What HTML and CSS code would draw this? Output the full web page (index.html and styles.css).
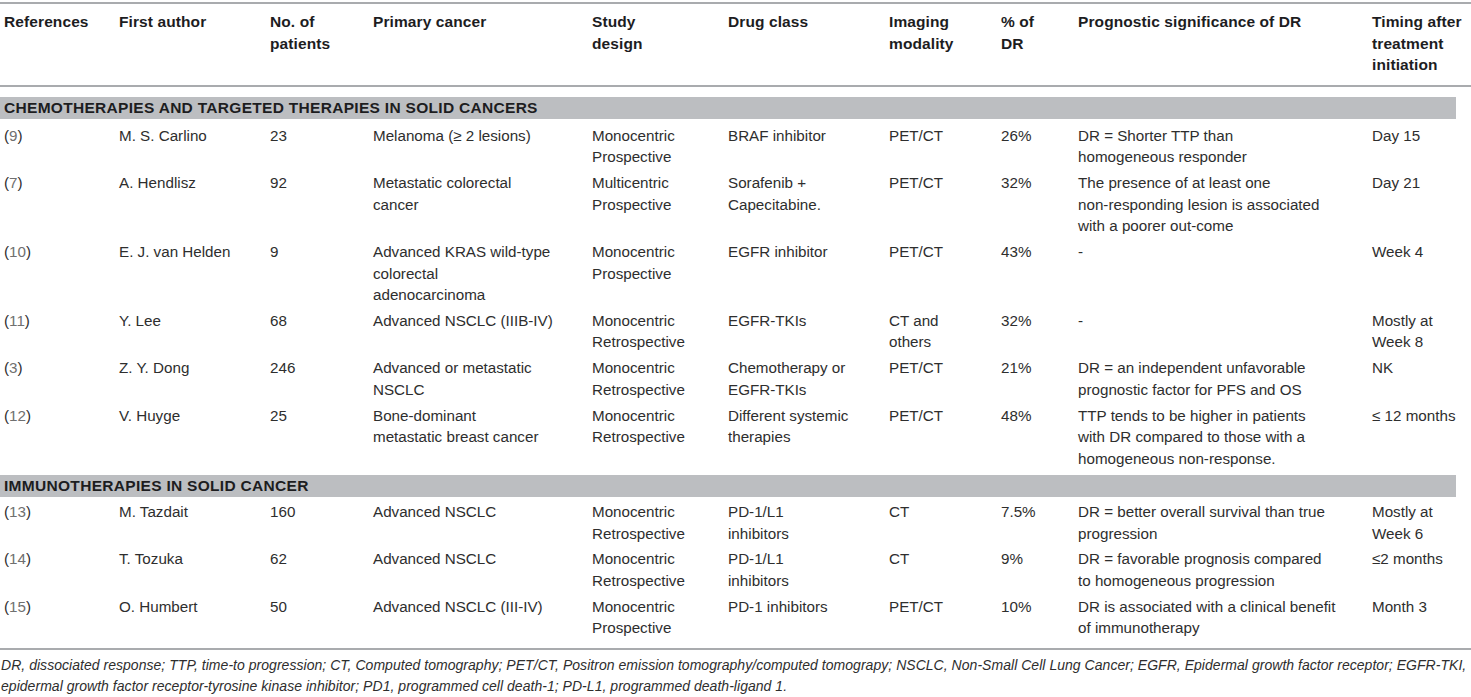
FILE: index.html
```html
<!DOCTYPE html>
<html lang="en">
<head>
<meta charset="utf-8">
<title>Dissociated response table</title>
<link rel="stylesheet" href="styles.css">
</head>
<body>
<div class="page">
<table class="dr-table">
  <colgroup>
    <col class="c1"><col class="c2"><col class="c3"><col class="c4"><col class="c5">
    <col class="c6"><col class="c7"><col class="c8"><col class="c9"><col class="c10">
  </colgroup>
  <thead>
    <tr>
      <th>References</th>
      <th>First author</th>
      <th>No. of<br>patients</th>
      <th>Primary cancer</th>
      <th>Study<br>design</th>
      <th>Drug class</th>
      <th>Imaging<br>modality</th>
      <th>% of<br>DR</th>
      <th>Prognostic significance of DR</th>
      <th>Timing after<br>treatment<br>initiation</th>
    </tr>
  </thead>
  <tbody>
    <tr class="section first">
      <td colspan="10"><div class="band">CHEMOTHERAPIES AND TARGETED THERAPIES IN SOLID CANCERS</div></td>
    </tr>
    <tr>
      <td><span class="ref">(<span class="num">9</span>)</span></td>
      <td>M. S. Carlino</td>
      <td>23</td>
      <td>Melanoma (≥ 2 lesions)</td>
      <td>Monocentric<br>Prospective</td>
      <td>BRAF inhibitor</td>
      <td>PET/CT</td>
      <td>26%</td>
      <td>DR = Shorter TTP than<br>homogeneous responder</td>
      <td>Day 15</td>
    </tr>
    <tr>
      <td><span class="ref">(<span class="num">7</span>)</span></td>
      <td>A. Hendlisz</td>
      <td>92</td>
      <td>Metastatic colorectal<br>cancer</td>
      <td>Multicentric<br>Prospective</td>
      <td>Sorafenib +<br>Capecitabine.</td>
      <td>PET/CT</td>
      <td>32%</td>
      <td>The presence of at least one<br>non-responding lesion is associated<br>with a poorer out-come</td>
      <td>Day 21</td>
    </tr>
    <tr>
      <td><span class="ref">(<span class="num">10</span>)</span></td>
      <td>E. J. van Helden</td>
      <td>9</td>
      <td>Advanced KRAS wild-type<br>colorectal<br>adenocarcinoma</td>
      <td>Monocentric<br>Prospective</td>
      <td>EGFR inhibitor</td>
      <td>PET/CT</td>
      <td>43%</td>
      <td>-</td>
      <td>Week 4</td>
    </tr>
    <tr>
      <td><span class="ref">(<span class="num">11</span>)</span></td>
      <td>Y. Lee</td>
      <td>68</td>
      <td>Advanced NSCLC (IIIB-IV)</td>
      <td>Monocentric<br>Retrospective</td>
      <td>EGFR-TKIs</td>
      <td>CT and<br>others</td>
      <td>32%</td>
      <td>-</td>
      <td>Mostly at<br>Week 8</td>
    </tr>
    <tr>
      <td><span class="ref">(<span class="num">3</span>)</span></td>
      <td>Z. Y. Dong</td>
      <td>246</td>
      <td>Advanced or metastatic<br>NSCLC</td>
      <td>Monocentric<br>Retrospective</td>
      <td>Chemotherapy or<br>EGFR-TKIs</td>
      <td>PET/CT</td>
      <td>21%</td>
      <td>DR = an independent unfavorable<br>prognostic factor for PFS and OS</td>
      <td>NK</td>
    </tr>
    <tr>
      <td><span class="ref">(<span class="num">12</span>)</span></td>
      <td>V. Huyge</td>
      <td>25</td>
      <td>Bone-dominant<br>metastatic breast cancer</td>
      <td>Monocentric<br>Retrospective</td>
      <td>Different systemic<br>therapies</td>
      <td>PET/CT</td>
      <td>48%</td>
      <td>TTP tends to be higher in patients<br>with DR compared to those with a<br>homogeneous non-response.</td>
      <td>≤ 12 months</td>
    </tr>
    <tr class="section">
      <td colspan="10"><div class="band">IMMUNOTHERAPIES IN SOLID CANCER</div></td>
    </tr>
    <tr>
      <td><span class="ref">(<span class="num">13</span>)</span></td>
      <td>M. Tazdait</td>
      <td>160</td>
      <td>Advanced NSCLC</td>
      <td>Monocentric<br>Retrospective</td>
      <td>PD-1/L1<br>inhibitors</td>
      <td>CT</td>
      <td>7.5%</td>
      <td>DR = better overall survival than true<br>progression</td>
      <td>Mostly at<br>Week 6</td>
    </tr>
    <tr>
      <td><span class="ref">(<span class="num">14</span>)</span></td>
      <td>T. Tozuka</td>
      <td>62</td>
      <td>Advanced NSCLC</td>
      <td>Monocentric<br>Retrospective</td>
      <td>PD-1/L1<br>inhibitors</td>
      <td>CT</td>
      <td>9%</td>
      <td>DR = favorable prognosis compared<br>to homogeneous progression</td>
      <td>≤2 months</td>
    </tr>
    <tr class="last">
      <td><span class="ref">(<span class="num">15</span>)</span></td>
      <td>O. Humbert</td>
      <td>50</td>
      <td>Advanced NSCLC (III-IV)</td>
      <td>Monocentric<br>Prospective</td>
      <td>PD-1 inhibitors</td>
      <td>PET/CT</td>
      <td>10%</td>
      <td>DR is associated with a clinical benefit<br>of immunotherapy</td>
      <td>Month 3</td>
    </tr>
  </tbody>
</table>
<p class="footnote">DR, dissociated response; TTP, time-to progression; CT, Computed tomography; PET/CT, Positron emission tomography/computed tomograpy; NSCLC, Non-Small Cell Lung Cancer; EGFR, Epidermal growth factor receptor; EGFR-TKI,<br>epidermal growth factor receptor-tyrosine kinase inhibitor; PD1, programmed cell death-1; PD-L1, programmed death-ligand 1.</p>
</div>
</body>
</html>
```

FILE: styles.css
```css
html, body {
  margin: 0;
  padding: 0;
  background: #ffffff;
}

body {
  font-family: "Liberation Sans", Arial, sans-serif;
  color: #2e2e2e;
  width: 1471px;
}

.page {
  padding-top: 2px;
}

.dr-table {
  width: 1471px;
  table-layout: fixed;
  border-collapse: collapse;
  border-top: 2px solid #a9abae;
  border-bottom: 2px solid #a9abae;
  font-size: 15.2px;
  line-height: 21.6px;
}

.c1 { width: 115px; }
.c2 { width: 151px; }
.c3 { width: 103px; }
.c4 { width: 219px; }
.c5 { width: 136px; }
.c6 { width: 161px; }
.c7 { width: 112px; }
.c8 { width: 77px; }
.c9 { width: 294px; }
.c10 { width: 103px; }

.dr-table th {
  text-align: left;
  vertical-align: top;
  font-weight: bold;
  font-size: 15.5px;
  letter-spacing: 0.1px;
  color: #1d1d1f;
  padding: 7px 4px 9px 4px;
  border-bottom: 2px solid #a9abae;
  white-space: nowrap;
}

.dr-table td {
  text-align: left;
  vertical-align: top;
  padding: 2.8px 4px 1.4px 4px;
  white-space: nowrap;
}

.dr-table tr.section td {
  padding: 4px 15px 1.5px 0;
}

.dr-table tr.section.first td {
  padding-top: 10px;
  padding-bottom: 3px;
}

.dr-table tr.last td {
  padding-bottom: 8.7px;
}

.band {
  background: #bcbec1;
  color: #1d1d1f;
  font-weight: bold;
  font-size: 15.5px;
  letter-spacing: 0.3px;
  height: 22px;
  line-height: 22px;
  padding-left: 4px;
}

.ref .num {
  color: #707070;
}

.footnote {
  margin: 5.5px 0 0 1px;
  font-style: italic;
  font-size: 14px;
  letter-spacing: 0.035px;
  line-height: 21px;
  color: #2e2e2e;
  white-space: nowrap;
}
```
